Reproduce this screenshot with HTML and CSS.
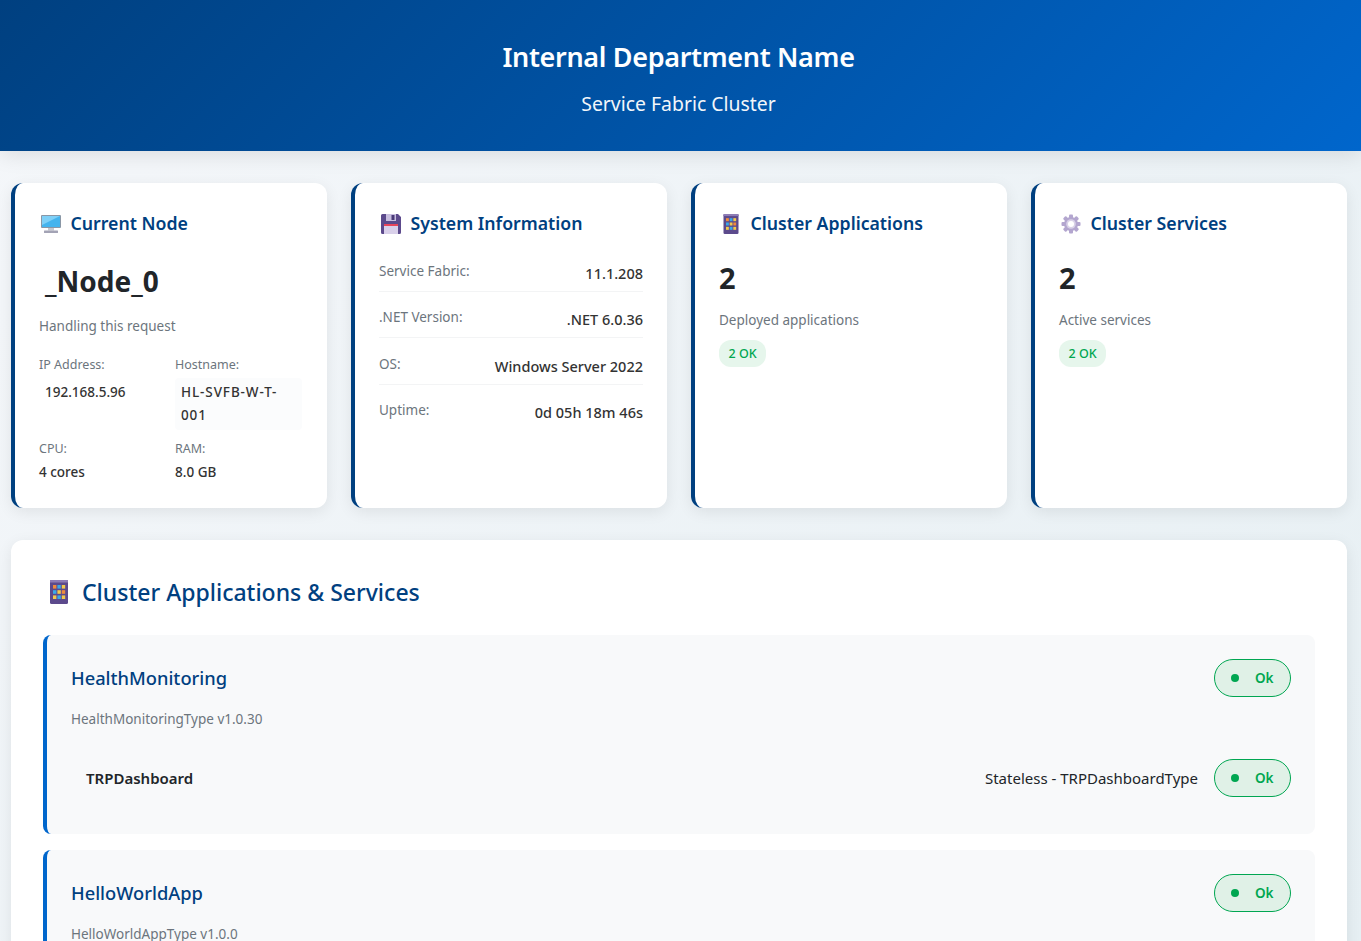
FILE: index.html
```html
<!DOCTYPE html>
<html>
<head>
    <title>Service Fabric Cluster</title>
    <link rel="stylesheet" href="styles.css">
</head>
<body>
    <svg class="icon-defs" width="0" height="0">
        <symbol id="icon-apps" viewBox="1 0 18 24">
            <rect x="1" y="0" width="18" height="24" rx="1.5" fill="#5c4a8c"/>
            <rect x="1" y="0" width="18" height="2.5" fill="#8d7cb5"/>
            <rect x="4" y="5" width="3.4" height="3.6" fill="#f08a3c"/>
            <rect x="8.4" y="5" width="3.4" height="3.6" fill="#3aa8e8"/>
            <rect x="12.8" y="5" width="3.4" height="3.6" fill="#f2c94c"/>
            <rect x="4" y="10.2" width="3.4" height="3.6" fill="#3aa8e8"/>
            <rect x="8.4" y="10.2" width="3.4" height="3.6" fill="#f2c94c"/>
            <rect x="12.8" y="10.2" width="3.4" height="3.6" fill="#f08a3c"/>
            <rect x="4" y="15.4" width="3.4" height="3.6" fill="#f2c94c"/>
            <rect x="8.4" y="15.4" width="3.4" height="3.6" fill="#3aa8e8"/>
            <rect x="12.8" y="15.4" width="3.4" height="3.6" fill="#f2c94c"/>
        </symbol>
    </svg>

    <header class="header">
        <h1>Internal Department Name</h1>
        <p>Service Fabric Cluster</p>
    </header>

    <main class="container">
        <div class="cards">
            <section class="card">
                <h2 class="card-title">
                    <svg class="icon" viewBox="0 0 20 20">
                        <rect x="0" y="1" width="20" height="13" rx="1" fill="#8a97a6"/>
                        <rect x="1" y="2" width="18" height="11" fill="#45b4ee"/>
                        <path d="M1 2h18L1 11z" fill="#7fd0f7"/>
                        <rect x="7" y="14" width="6" height="2.5" fill="#c4c8d0"/>
                        <rect x="3" y="16.5" width="14" height="2.5" rx="0.5" fill="#a3a3b5"/>
                    </svg>
                    Current Node
                </h2>
                <div class="node-name">_Node_0</div>
                <div class="muted">Handling this request</div>
                <div class="node-grid">
                    <div>
                        <div class="node-label">IP Address:</div>
                        <div class="node-code">192.168.5.96</div>
                    </div>
                    <div>
                        <div class="node-label">Hostname:</div>
                        <div class="node-code node-code-bg">HL-SVFB-W-T-001</div>
                    </div>
                    <div>
                        <div class="node-label">CPU:</div>
                        <div class="node-value">4 cores</div>
                    </div>
                    <div>
                        <div class="node-label">RAM:</div>
                        <div class="node-value">8.0 GB</div>
                    </div>
                </div>
            </section>

            <section class="card">
                <h2 class="card-title">
                    <svg class="icon" viewBox="0 0 20 20">
                        <path d="M1.5 0H17l3 3v15.5a1.5 1.5 0 0 1-1.5 1.5h-17A1.5 1.5 0 0 1 0 18.5V1.5A1.5 1.5 0 0 1 1.5 0z" fill="#5c4a8c"/>
                        <rect x="5" y="0" width="10" height="7" fill="#c9bfe0"/>
                        <rect x="10.5" y="1" width="3" height="5" fill="#4a3b78"/>
                        <rect x="3" y="10" width="14" height="10" fill="#d9d0ea"/>
                        <rect x="3" y="10" width="14" height="2" fill="#e8455a"/>
                    </svg>
                    System Information
                </h2>
                <div class="info-row"><span class="info-label">Service Fabric:</span><span class="info-value">11.1.208</span></div>
                <div class="info-row"><span class="info-label">.NET Version:</span><span class="info-value">.NET 6.0.36</span></div>
                <div class="info-row"><span class="info-label">OS:</span><span class="info-value">Windows Server 2022</span></div>
                <div class="info-row"><span class="info-label">Uptime:</span><span class="info-value">0d 05h 18m 46s</span></div>
            </section>

            <section class="card">
                <h2 class="card-title">
                    <svg class="icon"><use href="#icon-apps"/></svg>
                    Cluster Applications
                </h2>
                <div class="big-number">2</div>
                <div class="muted muted-tight">Deployed applications</div>
                <span class="count-badge">2 OK</span>
            </section>

            <section class="card">
                <h2 class="card-title">
                    <svg class="icon" viewBox="0 0 20 20">
                        <g fill="#b3a6cf">
                            <rect x="8" y="0.5" width="4" height="19" rx="1"/>
                            <rect x="8" y="0.5" width="4" height="19" rx="1" transform="rotate(45 10 10)"/>
                            <rect x="8" y="0.5" width="4" height="19" rx="1" transform="rotate(90 10 10)"/>
                            <rect x="8" y="0.5" width="4" height="19" rx="1" transform="rotate(135 10 10)"/>
                            <circle cx="10" cy="10" r="7"/>
                        </g>
                        <circle cx="10" cy="10" r="4.8" fill="#d9d2e8"/>
                        <circle cx="10" cy="10" r="3" fill="#fff"/>
                    </svg>
                    Cluster Services
                </h2>
                <div class="big-number">2</div>
                <div class="muted muted-tight">Active services</div>
                <span class="count-badge">2 OK</span>
            </section>
        </div>

        <section class="panel">
            <h2 class="panel-title">
                <svg class="panel-icon"><use href="#icon-apps"/></svg>
                Cluster Applications &amp; Services
            </h2>

            <article class="app">
                <div class="app-head">
                    <h3>HealthMonitoring</h3>
                    <span class="status"><i></i>Ok</span>
                </div>
                <div class="app-type">HealthMonitoringType v1.0.30</div>
                <div class="service">
                    <span class="service-name">TRPDashboard</span>
                    <span class="service-type">Stateless - TRPDashboardType</span>
                    <span class="status"><i></i>Ok</span>
                </div>
            </article>

            <article class="app">
                <div class="app-head">
                    <h3>HelloWorldApp</h3>
                    <span class="status"><i></i>Ok</span>
                </div>
                <div class="app-type">HelloWorldAppType v1.0.0</div>
            </article>
        </section>
    </main>
</body>
</html>
```

FILE: styles.css
```css
* {
  box-sizing: border-box;
}

html {
  overflow: hidden;
  height: 941px;
}

body {
  margin: 0;
  height: 941px;
  font-family: "Noto Sans", "Open Sans", sans-serif;
  background: linear-gradient(135deg, #f5f7fa, #e6eff3);
  color: #212529;
}

.icon-defs {
  position: absolute;
}

.header {
  height: 151px;
  padding-top: 38px;
  padding-right: 4px;
  text-align: center;
  color: #fff;
  background: linear-gradient(135deg, #004080, #0066cc);
  box-shadow: 0 4px 20px rgba(0, 0, 0, 0.1);
}

.header h1 {
  margin: 0;
  font-size: 27px;
  line-height: 38px;
  font-weight: 600;
  letter-spacing: -0.33px;
}

.header p {
  margin: 15px 0 0;
  font-size: 19.4px;
  line-height: 26px;
  opacity: 0.95;
}

.container {
  padding: 32px 14px 0 11px;
}

.cards {
  display: grid;
  grid-template-columns: repeat(4, 316px);
  gap: 24px;
  margin-bottom: 32px;
}

.card {
  height: 325px;
  padding: 27px 24px 24px;
  background-color: #fff;
  border-left: 4px solid #004080;
  border-radius: 12px;
  box-shadow: 0 4px 15px rgba(0, 0, 0, 0.08);
}

.card-title {
  display: flex;
  align-items: center;
  margin: 0 0 0 2px;
  font-size: 17.7px;
  line-height: 27px;
  font-weight: 600;
  color: #004080;
}

.icon {
  width: 20px;
  height: 20px;
  margin-right: 9.5px;
}

.node-name {
  margin: 24px 0 0 6px;
  font-size: 28px;
  line-height: 40px;
  font-weight: 700;
}

.muted {
  margin-top: 15px;
  font-size: 13.5px;
  line-height: 20px;
  color: #6c757d;
}

.muted-tight {
  margin-top: 12px;
}

.node-grid {
  display: grid;
  grid-template-columns: 136px 127px;
  row-gap: 10px;
  margin-top: 20px;
}

.node-label {
  font-size: 12.5px;
  line-height: 18px;
  color: #6c757d;
}

.node-code {
  margin-top: 4px;
  padding: 3px 6px;
  font-size: 13.5px;
  line-height: 23px;
  font-weight: 500;
  color: #333;
}

.node-code-bg {
  background-color: #fbfcfd;
  border-radius: 4px;
  letter-spacing: 0.9px;
}

.node-value {
  margin-top: 4px;
  font-size: 13.5px;
  line-height: 20px;
  font-weight: 500;
  color: #333;
}

.info-row {
  display: flex;
  justify-content: space-between;
  height: 46.5px;
  padding-top: 15.5px;
  border-bottom: 1px solid #f3f4f5;
}

.info-row:first-of-type {
  margin-top: 8px;
}

.info-row:last-child {
  border-bottom: none;
}

.info-label {
  font-size: 13.5px;
  line-height: 20px;
  color: #6c757d;
}

.info-value {
  margin-top: 2px;
  font-size: 14.5px;
  line-height: 20px;
  font-weight: 500;
  color: #333;
}

.big-number {
  margin-top: 21px;
  font-size: 29px;
  line-height: 40px;
  font-weight: 700;
}

.count-badge {
  display: inline-block;
  margin-top: 10px;
  padding: 0 9.5px;
  font-size: 12.5px;
  line-height: 27px;
  font-weight: 500;
  color: #00a651;
  background-color: #e6f6ec;
  border-radius: 12px;
}

.panel {
  padding: 32px;
  background-color: #fff;
  border-radius: 12px;
  box-shadow: 0 4px 15px rgba(0, 0, 0, 0.08);
}

.panel-title {
  display: flex;
  align-items: center;
  margin: 0 0 23px 7px;
  font-size: 23px;
  line-height: 40px;
  font-weight: 500;
  color: #004080;
}

.panel-icon {
  width: 18px;
  height: 24px;
  margin-right: 14px;
}

.app {
  margin-bottom: 16px;
  padding: 24px;
  background-color: #f8f9fa;
  border-left: 4px solid #0066cc;
  border-radius: 8px;
}

.app-head {
  display: flex;
  justify-content: space-between;
  align-items: center;
}

.app-head h3 {
  margin: 0;
  padding-bottom: 2px;
  font-size: 18.3px;
  line-height: 27px;
  font-weight: 500;
  color: #004080;
}

.app-type {
  margin-top: 12px;
  font-size: 13.5px;
  line-height: 20px;
  color: #6c757d;
}

.service {
  display: flex;
  align-items: center;
  margin: 30px 0 13px;
  padding-left: 15px;
  height: 38px;
}

.service-name {
  margin-right: auto;
  font-size: 15px;
  font-weight: 600;
}

.service-type {
  margin-right: 16px;
  font-size: 15px;
}

.status {
  display: flex;
  align-items: center;
  width: 77px;
  height: 38px;
  padding-left: 16px;
  font-size: 13.5px;
  font-weight: 600;
  color: #00a651;
  background-color: #e0f1e7;
  border: 1px solid #00a651;
  border-radius: 19px;
}

.status i {
  width: 8px;
  height: 8px;
  margin-right: 16px;
  background-color: #00a651;
  border-radius: 50%;
}
```
